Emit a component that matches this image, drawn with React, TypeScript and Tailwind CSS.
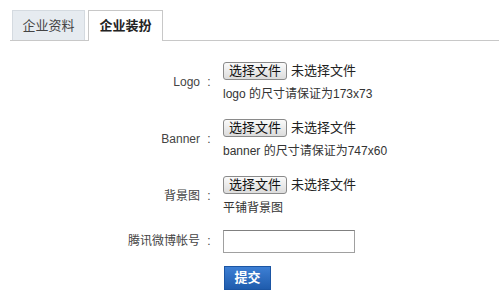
import React from 'react';

const font = { fontFamily: '"Liberation Sans", "Noto Sans CJK SC", sans-serif' };

function FileField({ hint }: { hint: string }) {
  return (
    <div className="flex flex-col">
      <div className="flex items-center h-[20px]">
        <button className="h-[18px] px-[5px] border border-[#8a8a8a] rounded-[3px] bg-gradient-to-b from-[#fafafa] to-[#dcdcdc] text-[13px] leading-[16px] text-[#111]">
          选择文件
        </button>
        <span className="ml-[4px] text-[13px] text-[#222]">未选择文件</span>
      </div>
      <div className="mt-[5px] text-[12px] leading-[16px] text-[#333]">{hint}</div>
    </div>
  );
}

function Row({ label, children, className = '' }: { label: string; children: React.ReactNode; className?: string }) {
  return (
    <div className={`flex items-center ${className}`}>
      <div className="w-[223px] pr-[5px] flex justify-end text-[12px] text-[#444]">
        <span>{label}</span>
        <span className="w-[18px] text-center">:</span>
      </div>
      <div>{children}</div>
    </div>
  );
}

export default function App() {
  return (
    <div className="w-[499px] h-[305px] bg-white" style={font}>
      <div className="pt-[10px] ml-[10px] pl-[2px] flex items-end border-b border-[#c8c8c8] h-[41px]">
        <div className="w-[73px] h-[30px] flex items-center justify-center bg-[#e6ebf0] border border-b-0 border-[#d4dae0] text-[13px] text-[#444]">
          企业资料
        </div>
        <div className="ml-[3px] w-[75px] h-[31px] -mb-px flex items-center justify-center bg-white border border-b-0 border-[#c8c8c8] text-[13px] font-bold text-[#222]">
          企业装扮
        </div>
      </div>

      <div className="pt-[20px]">
        <Row label="Logo">
          <FileField hint="logo 的尺寸请保证为173x73" />
        </Row>
        <Row label="Banner" className="mt-[16px]">
          <FileField hint="banner 的尺寸请保证为747x60" />
        </Row>
        <Row label="背景图" className="mt-[16px]">
          <FileField hint="平铺背景图" />
        </Row>
        <Row label="腾讯微博帐号" className="mt-[13px]">
          <input className="w-[132px] h-[23px] border border-[#a0a0a0] border-t-[#808080] outline-none bg-white" />
        </Row>
        <div className="pl-[224px] mt-[12px]">
          <button className="w-[47px] h-[24px] bg-gradient-to-b from-[#3d7fd4] to-[#1f5cad] border border-[#1b55a3] text-white text-[13px] font-bold">
            提交
          </button>
        </div>
      </div>
    </div>
  );
}
